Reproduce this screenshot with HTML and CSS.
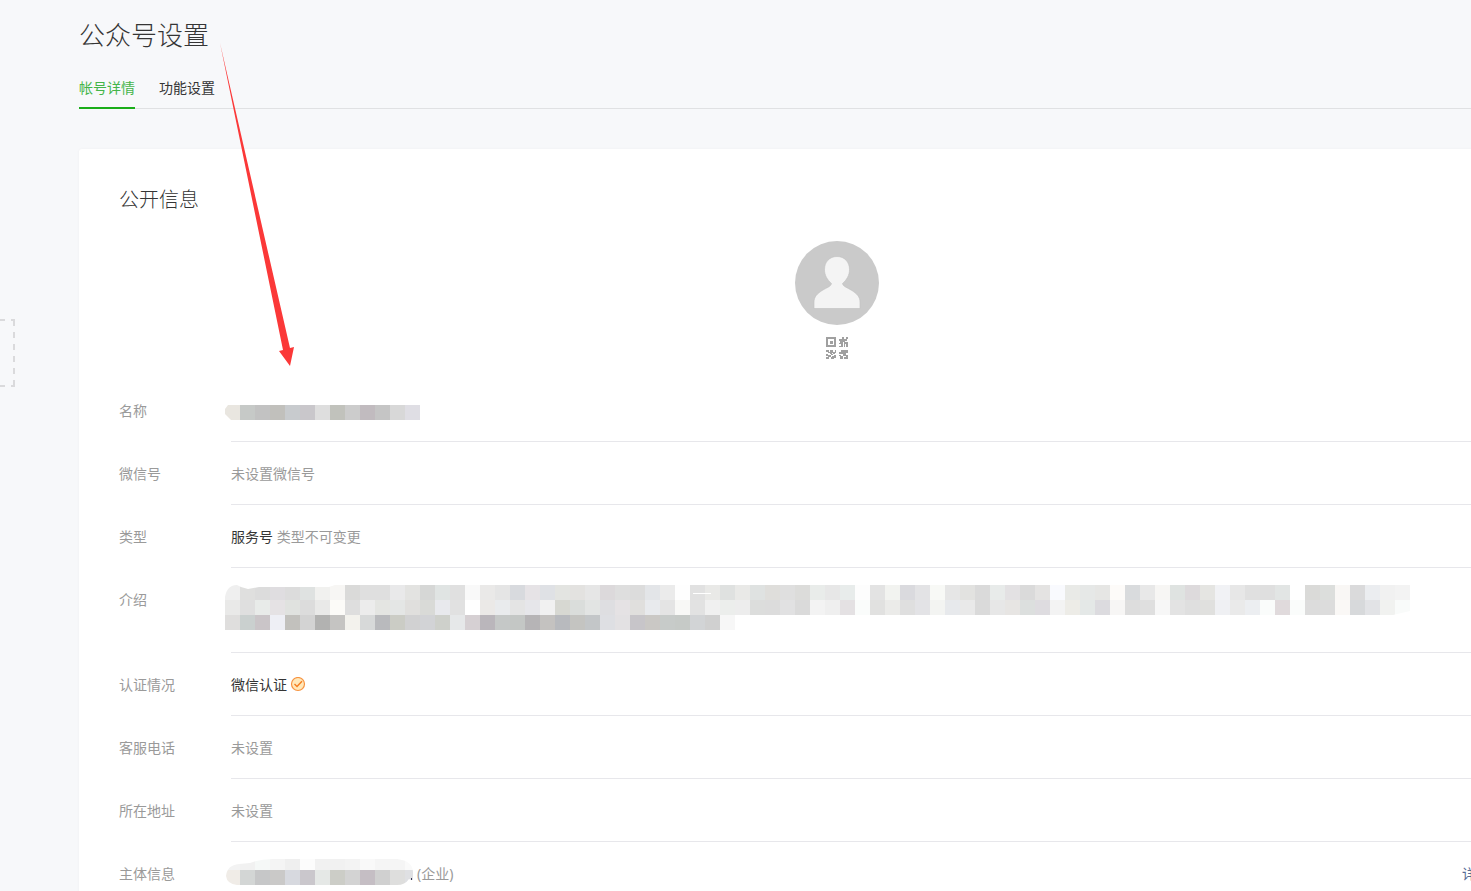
FILE: index.html
```html
<!DOCTYPE html>
<html lang="zh-CN">
<head>
<meta charset="utf-8">
<title>公众号设置</title>
<link rel="stylesheet" href="styles.css">
</head>
<body>
<svg class="drop-frame" width="15" height="68" viewBox="0 0 15 68" aria-hidden="true">
  <path d="M0 0H5V2H0ZM11 0H15V7H13V2H11ZM13 13H15V19H13ZM13 25H15V31H13ZM13 37H15V43H13ZM13 49H15V55H13ZM13 61H15V68H11V66H13ZM0 66H5V68H0Z"/>
</svg>
<main class="page">
  <h1 class="page-title">公众号设置</h1>
  <nav class="tabs">
    <a class="tab tab-active" href="#detail">帐号详情</a>
    <a class="tab" href="#feature">功能设置</a>
  </nav>
  <section class="card">
    <h2 class="card-title">公开信息</h2>
    <div class="profile">
      <svg class="avatar" width="84" height="84" viewBox="0 0 84 84" role="img" aria-label="头像">
        <circle cx="42" cy="42" r="42" fill="#cacaca"/>
        <path d="M42 15.500C49.500 15.500 54.500 21 54.500 28.500C54.500 34.500 51.500 39 47.500 42.500C48 45.500 52 46.500 56 49C62 52.500 65 56 65 61V67.500H19V61C19 56 22 52.500 28 49C32 46.500 36 45.500 36.500 42.500C32.500 39 29.500 34.500 29.500 28.500C29.500 21 34.500 15.500 42 15.500Z" fill="#f4f4f4" stroke="#c0c0c0" stroke-width=".6"/>
      </svg>
      <a class="qr-link" href="#qr" aria-label="二维码">
        <svg width="24" height="24" viewBox="0 0 24 24" fill="#a0a0a0" shape-rendering="crispEdges">
          <path fill-rule="evenodd" d="M1 1H11V11H1ZM3 3V9H9V3Z"/>
          <path d="M5 5H8V8H5ZM17 1H19V3H17ZM21 1H23V3H21ZM14 3H16V5H14ZM16 3H22V5H16ZM18 5H20V6H18ZM15 5H18V7H15ZM14 7H16V8H14ZM16 7H18V11H16ZM14 10H16V11H14ZM19 6H23V8H19ZM19 8H20V11H19ZM21 8H23V11H21ZM1 14H4V16H1ZM5 14H8V17H5ZM10 14H11V17H10ZM3 16H5V17H3ZM8 16H10V18H8ZM5 17H7V18H5ZM1 18H3V20H1ZM3 19H6V21H3ZM6 18H8V19H6ZM1 21H4V23H1ZM7 20H9V21H7ZM9 19H11V22H9ZM6 21H9V23H6ZM16 14H23V17H16ZM14 16H18V18H14ZM18 17H21V20H18ZM14 19H16V20H14ZM15 20H18V23H15ZM21 19H23V21H21ZM19 21H23V23H19Z"/>
        </svg>
      </a>
    </div>
    <dl class="info">
      <div class="row">
        <dt class="label">名称</dt>
        <dd class="value"><svg class="mosaic mosaic-name" width="195" height="15" data-mosaic="name" aria-hidden="true"></svg></dd>
      </div>
      <div class="row">
        <dt class="label">微信号</dt>
        <dd class="value muted">未设置微信号</dd>
      </div>
      <div class="row">
        <dt class="label">类型</dt>
        <dd class="value">服务号 <span class="muted">类型不可变更</span></dd>
      </div>
      <div class="row">
        <dt class="label">介绍</dt>
        <dd class="value"><svg class="mosaic mosaic-intro" width="1185" height="45" data-mosaic="intro" aria-hidden="true"></svg></dd>
      </div>
      <div class="row">
        <dt class="label">认证情况</dt>
        <dd class="value verified">微信认证
          <svg width="16" height="16" viewBox="0 0 16 16" aria-hidden="true">
            <circle cx="8" cy="7" r="6.500" fill="#ffe8ba" stroke="#f79340" stroke-width="1.200"/>
            <path d="M4.500 7L7 9.500L12 4.300" fill="none" stroke="#f57c1f" stroke-width="1.400"/>
          </svg>
        </dd>
      </div>
      <div class="row">
        <dt class="label">客服电话</dt>
        <dd class="value muted">未设置</dd>
      </div>
      <div class="row">
        <dt class="label">所在地址</dt>
        <dd class="value muted">未设置</dd>
      </div>
      <div class="row">
        <dt class="label">主体信息</dt>
        <dd class="value subject muted"><svg class="mosaic mosaic-subject" width="188" height="26" data-mosaic="subject" aria-hidden="true"></svg><span>(企业)</span><a class="detail-link" href="#subject">详情</a></dd>
      </div>
    </dl>
  </section>
</main>
<svg class="arrow" width="76" height="324" viewBox="0 0 76 324" aria-hidden="true">
  <path d="M1 0L71 305L75 304L71 323L60 308L64 307Z" fill="#fb3838"/>
</svg>
<script src="mosaic.js"></script>
</body>
</html>
```
FILE: styles.css
```css
* {
  box-sizing: border-box;
}

body {
  margin: 0;
  position: relative;
  height: 100vh;
  overflow: hidden;
  background: #f7f8fa;
  color: #353535;
  font: 400 14px/22px "Noto Sans", "Noto Sans CJK SC", sans-serif;
}

a {
  text-decoration: none;
}

.page {
  margin-left: 79px;
  margin-right: -124px;
  padding-top: 16px;
}

.page-title {
  margin: 0;
  font-size: 26px;
  font-weight: 300;
  line-height: 38px;
}

.tabs {
  display: flex;
  gap: 24px;
  margin-top: 23px;
  border-bottom: 1px solid #e0e1e3;
}

.tab {
  height: 32px;
  margin-bottom: -1px;
  color: #353535;
}

.tab-active {
  color: #44b549;
  border-bottom: 2px solid #1aad19;
}

.card {
  margin-top: 40px;
  padding: 36px 40px;
  background: #fff;
  border-radius: 3px;
  box-shadow: 0 0 3px rgba(0, 0, 0, 0.04);
}

.card-title {
  margin: 0;
  font-size: 20px;
  font-weight: 300;
  line-height: 30px;
}

.profile {
  display: flex;
  flex-direction: column;
  align-items: center;
  gap: 11px;
  margin-top: 26px;
}

.qr-link {
  display: flex;
}

.info {
  margin: 19px 0 0;
}

.row {
  display: flex;
}

.label {
  width: 112px;
  padding-top: 21px;
  color: #9a9a9a;
}

.value {
  flex: 1;
  margin: 0;
  padding: 21px 0 19px;
  border-bottom: 1px solid #e7e7eb;
}

.muted {
  color: #9a9a9a;
}

.verified {
  display: flex;
  align-items: center;
  gap: 3px;
}

.mosaic {
  display: block;
  margin-left: -6px;
}

.mosaic-name {
  margin-top: 5px;
  margin-bottom: 2px;
}

.mosaic-intro {
  margin-top: -4px;
  margin-bottom: 3px;
}

.mosaic-subject {
  margin-top: -4px;
}

.subject {
  display: flex;
  gap: 4px;
}

.detail-link {
  width: 93px;
  margin-left: auto;
  color: #576b95;
}

.drop-frame {
  position: absolute;
  left: 0;
  top: 319px;
  fill: #dadadc;
}

.arrow {
  position: absolute;
  left: 219px;
  top: 43px;
  pointer-events: none;
}
```
FILE: mosaic.js
```js
// Paints the pixelated blocks that hide private account details.
const CELL = 15;
const mosaics = {
  name: {
    clip: "M3 0H195V15H6L0 9V4Z",
    rows: [{ y: 0, h: 15, c: "e9e6e0 c6c9c7 c2c2c2 c1c0bc c8cbce c9c7cb dedede c1c2bc cccccc c1bbbf c5c5c5 d8d8d8 dfdee4" }]
  },
  intro: {
    clip: "M0 12Q2 0 12 0L16 2L23 4L34 2H104L110 0H1185V26L1168 30H735V45H0Z",
    rows: [
      { y: 0, h: 15, c: "efefef dfdfde dcdcdc dfdde0 dcdcdc dfe2e1 f1f1ef f7f6f4 dadad9 dfdfdf dfdfdf e9e9ea e3e3e1 d6d7d6 e0e4e3 e0e0e0 f9f9f9 eae9e8 e5e5e5 d8dade e6e3e6 dfe1e5 e3e4e1 e3e2e0 e6e6e6 dcd9db dedede dcdcdc e3e5e8 ebebeb fefefe e1e1e1 e9e9e7 dfe1e0 e9e9e7 dfe2e1 dfdedb dfdfdf dcdcda e9ecea e7e7e7 e8eceb fdfdfd e3e3e3 f2f3f0 dadade e3e3e5 f8f9f6 e6e6e6 e2e2e0 dadada e8ebea e3e1e3 dadada e4e3e2 f9fafe e9eae7 e6e8e7 e6e6e4 fdfbf9 d9dbdd e8e8e8 f7f6f4 dfe3e1 dddadc e5e5e2 f1f2f5 e7e7e7 e0e0e0 dfdfdf e2e5e4 ffffff dadad8 dcdedc f9f7f5 dadadb ebedf0 f1f1f1 f3f3f3" },
      { y: 15, h: 15, c: "e9e9e8 dfdfdf e8ebe9 e5e2e4 e0e2df dcdcdc e9e9e8 fcfbf8 dedede ececec e4e5e2 e4e6e5 e0dfdd d9dad7 e8e9ed e1e1e1 ffffff ebe9e7 e9ebed e4e4e4 e6e6ea f1f1f1 d7d8d2 dadddb e2e4e3 dedee1 e5e2e4 e0dfdd e8eaed e4e4e4 f8f8f6 e2e2e2 f0f0f0 eceeec ededed dcdddc dcdcdc e1e1e2 dadada f3f3f3 efefef e4e1e3 fafcfb e1e1e0 ebebe9 dfdfdf e3e3e6 f3f4f2 e7e9ec e9e9e9 dadada e7e7e7 e7e5e3 dcdfde dedce0 f3f3f3 edece7 e4e8e7 dcdbdf f7f6f5 dddddd dfdfdf f7f7f7 e3e3e3 dfdfdf e0e0de eff0f3 eaeaea eceef1 fafcfb e0dadc fafcfb dcdcdc dcdcdc faf8f6 d7d9db e2e3e6 f1f2f0 f9fbfa" },
      { y: 30, h: 15, c: "dfdedd cad0cf cac5c8 eeeff5 c2c1bd d3d3d3 b2b2b1 c5c4c2 f3f2ed d7d9d9 b9babd cbccc5 d1d1d2 d2d3d6 ced0cb e6e8e9 d6d0d3 bab6bb c5c8c7 c4c7c5 b6b4b6 c4c2c0 b8babe c4c4c1 c3c6c8 dedfe3 e3e1e3 c7c5c9 cac8c5 c7cbc9 c6cac7 d2d4d6 d0d0d0 f7f7f7" }
    ],
    marks: [{ x: 468, y: 8, w: 18, h: 1, c: "ffffff" }]
  },
  subject: {
    clip: "M1 17Q2 6 14 5L25 4Q35 0 48 0H172Q188 2 188 13V21H186L184 20Q180 26 172 26H12Q2 25 1 17Z",
    rows: [
      { y: 0, h: 11, c: "f3f3f3 f1f1f1 f5f8f7 f4f4f4 efefef fcfcfc f1f1f1 f1f1f1 f3f3f3 f9f9f9 f5f5f5 f5f5f5 fafafa" },
      { y: 11, h: 15, c: "f0ece7 d3d6d5 c6c7c8 cac9c8 d7d9df cac7cc e5e8e6 cccdc7 d3d3d3 c5bec4 d0d0d0 dededd dfe0e3" }
    ],
    marks: [{ x: 186, y: 19, w: 1, h: 2, c: "353555" }]
  }
};

function rect(x, y, w, h, color) {
  return `<rect x="${x}" y="${y}" width="${w}" height="${h}" fill="#${color}"/>`;
}

document.querySelectorAll("[data-mosaic]").forEach((svg) => {
  const key = svg.dataset.mosaic;
  const { clip, rows, marks = [] } = mosaics[key];
  const cells = rows.flatMap((r) =>
    r.c.split(" ").map((color, i) => rect(i * CELL, r.y, CELL, r.h, color)));
  const extra = marks.map((m) => rect(m.x, m.y, m.w, m.h, m.c));
  svg.innerHTML = `<clipPath id="clip-${key}"><path d="${clip}"/></clipPath>` +
    `<g clip-path="url(#clip-${key})">${cells.join("")}${extra.join("")}</g>`;
});
```
